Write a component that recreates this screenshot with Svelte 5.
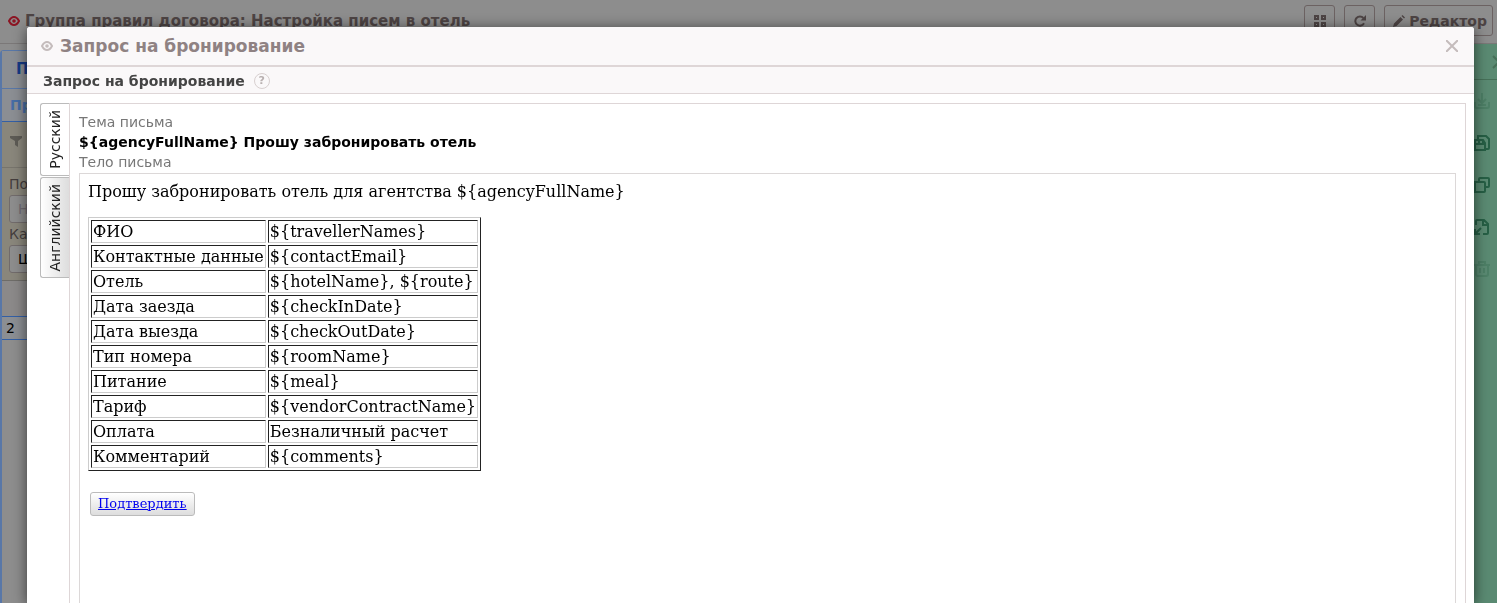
<script>
  const rows = [
    ['ФИО', '${travellerNames}'],
    ['Контактные данные', '${contactEmail}'],
    ['Отель', '${hotelName}, ${route}'],
    ['Дата заезда', '${checkInDate}'],
    ['Дата выезда', '${checkOutDate}'],
    ['Тип номера', '${roomName}'],
    ['Питание', '${meal}'],
    ['Тариф', '${vendorContractName}'],
    ['Оплата', 'Безналичный расчет'],
    ['Комментарий', '${comments}']
  ];

  const subject = '${agencyFullName} Прошу забронировать отель';
  const intro = 'Прошу забронировать отель для агентства ${agencyFullName}';

  let lang = $state('ru');
</script>

{#snippet eye()}
  <svg class="eye" viewBox="0 0 12 10" width="12" height="10">
    <path d="M1 5Q3 1 6 1T11 5Q9 9 6 9T1 5z" fill="none" stroke="currentColor" stroke-width="2" />
    <circle cx="6" cy="5" r="1.8" fill="currentColor" />
  </svg>
{/snippet}

<div class="page">
  <header class="topbar">
    {@render eye()}
    <h1>Группа правил договора: Настройка писем в отель</h1>
    <div class="tools">
      <button class="tool" aria-label="Плитка">
        <svg viewBox="0 0 12 12" width="12" height="12" fill="none" stroke="currentColor" stroke-width="2">
          <path d="M1 1h3v3h-3zM8 1h3v3h-3zM1 8h3v3h-3zM8 8h3v3h-3z" />
        </svg>
      </button>
      <button class="tool" aria-label="Обновить">
        <svg viewBox="0 0 12 12" width="12" height="12" fill="none" stroke="currentColor" stroke-width="2">
          <path d="M10 8.2a4.6 4.6 0 1 1-.6-5.200" />
          <path d="M12 0v5.500H6.500z" fill="currentColor" stroke="none" />
        </svg>
      </button>
      <button class="tool wide">
        <svg viewBox="0 0 12 12" width="12" height="12" fill="currentColor">
          <path d="M0 12l1-3.500L7.500 2 10 4.500 3.500 11zM8.500 1l1-1L12 2.500l-1 1z" />
        </svg>
        Редактор
      </button>
    </div>
  </header>

  <div class="workspace">
    <aside class="list">
      <div class="list-tab">П</div>
      <div class="list-sub">Пр</div>
      <div class="filter-head">
        <svg viewBox="0 0 12 11" width="12" height="11" fill="currentColor">
          <path d="M0 0h12v2L8 5V11L5 9V5L0 2z" />
        </svg>
      </div>
      <div class="filters">
        <label for="search">По</label>
        <input id="search" placeholder="Н" />
        <label for="category">Ка</label>
        <select id="category"><option>Ш</option></select>
      </div>
      <div class="list-head"></div>
      <div class="list-row">2</div>
    </aside>

    <nav class="actions">
      <button class="action close-panel" aria-label="Закрыть панель">
        <svg viewBox="0 0 16 16" width="16" height="16"><path d="M11 2l12 12M11 14L23 2" /></svg>
      </button>
      <button class="action faded" aria-label="Сохранить">
        <svg viewBox="0 0 16 16" width="16" height="16"><path d="M8 0v9M4 6l4 4 4-4M1 9v4q0 2 2 2h10q2 0 2-2v-4M4 12h8" /></svg>
      </button>
      <button class="action" aria-label="Сохранить как">
        <svg viewBox="0 0 16 16" width="16" height="16"><path d="M4 4V1h8l3 3v9q0 1-1 1h-3M1 5h8l2 3v7H1zM1 9h8V6M5 5v4" /></svg>
      </button>
      <button class="action" aria-label="Копировать">
        <svg viewBox="0 0 16 16" width="16" height="16"><path d="M5 5V2q0-1 1-1h8q1 0 1 1v7q0 1-1 1h-3M1 5h9q1 0 1 1v8q0 1-1 1H1z" /></svg>
      </button>
      <button class="action" aria-label="Загрузить">
        <svg viewBox="0 0 16 16" width="16" height="16"><path d="M2 6V2q0-1 1-1h7l4 4v9q0 1-1 1h-4M9 1v5h5M7 9l-6 6M1 10v5h5" /></svg>
      </button>
      <button class="action faded" aria-label="Удалить">
        <svg viewBox="0 0 16 16" width="16" height="16"><path d="M0 4h16M5 4V1h6v3M2 4v9q0 2 2 2h8q2 0 2-2V4M6 7v5M10 7v5" /></svg>
      </button>
    </nav>
  </div>
</div>

<div class="dialog" role="dialog" aria-labelledby="dialog-title">
  <div class="dialog-head">
    {@render eye()}
    <h2 id="dialog-title">Запрос на бронирование</h2>
    <button class="close" aria-label="Закрыть">
      <svg viewBox="0 0 12 12" width="12" height="12" fill="none" stroke="currentColor" stroke-width="2">
        <path d="M0 0l12 12M12 0L0 12" />
      </svg>
    </button>
  </div>

  <div class="section-head">
    <h3>Запрос на бронирование</h3>
    <button class="help">?</button>
  </div>

  <div class="content">
    <div class="tabs" role="tablist">
      <button role="tab" class="tab" class:active={lang === 'ru'} aria-selected={lang === 'ru'} onclick={() => (lang = 'ru')}>
        <span>Русский</span>
      </button>
      <button role="tab" class="tab" class:active={lang === 'en'} aria-selected={lang === 'en'} onclick={() => (lang = 'en')}>
        <span>Английский</span>
      </button>
    </div>

    <div class="panel">
      <div class="label">Тема письма</div>
      <div class="subject">{subject}</div>
      <div class="label">Тело письма</div>
      <div class="letter">
        <p>{intro}</p>
        <table>
          <tbody>
            {#each rows as [name, value]}
              <tr>
                <td>{name}</td>
                <td>{value}</td>
              </tr>
            {/each}
          </tbody>
        </table>
        <a class="confirm" href="#confirm">Подтвердить</a>
      </div>
    </div>
  </div>
</div>

<style>
  :global(body) {
    overflow: hidden;
    font-family: 'DejaVu Sans', sans-serif;
    font-size: 14px;
    color: #000;
  }

  h1,
  h2,
  h3 {
    margin: 0;
  }

  button,
  input,
  select {
    font-family: inherit;
    font-size: inherit;
  }

  svg {
    flex-shrink: 0;
  }

  .page {
    display: flex;
    flex-direction: column;
    height: 100vh;
    background: #8d8d8d;
  }

  .topbar {
    display: flex;
    align-items: center;
    gap: 5px;
    height: 44px;
    box-sizing: border-box;
    padding: 0 4px 2px 8px;
    border-bottom: 1px solid #7b7878;
    color: #4d4444;
  }

  .topbar .eye {
    color: #8c1422;
  }

  h1 {
    font-size: 15px;
    line-height: 20px;
  }

  .tools {
    display: flex;
    gap: 9px;
    margin-left: auto;
  }

  .tool {
    display: flex;
    align-items: center;
    justify-content: center;
    gap: 4px;
    width: 31px;
    height: 31px;
    box-sizing: border-box;
    padding: 0;
    border: 1px solid #6c6262;
    border-radius: 3px;
    background: none;
    color: #4d4444;
    font-weight: bold;
  }

  .tool.wide {
    width: auto;
    padding: 0 5px 0 8px;
  }

  .workspace {
    display: flex;
    justify-content: space-between;
    flex: 1;
  }

  .list {
    width: 200px;
    margin-top: 6px;
    border: 1px solid #5877a8;
    border-left-width: 2px;
    border-bottom: 0;
    border-radius: 4px 0 0 0;
    background: #8d8d8d;
  }

  .list-tab {
    height: 37px;
    padding-left: 14px;
    border-bottom: 1px solid #5877a8;
    background: #8b8e93;
    color: #163a86;
    font-size: 15px;
    font-weight: bold;
    line-height: 37px;
  }

  .list-sub {
    height: 32px;
    padding-left: 8px;
    border-bottom: 1px solid #335fa5;
    background: #8b8e93;
    color: #466da5;
    font-weight: bold;
    line-height: 32px;
  }

  .filter-head {
    display: flex;
    align-items: center;
    height: 46px;
    box-sizing: border-box;
    padding: 0 8px 6px;
    border-bottom: 1px solid #77746c;
    background: #89867b;
    color: #5d5b55;
  }

  .filters {
    display: flex;
    flex-direction: column;
    padding: 5px 7px 7px;
    border-bottom: 1px solid #6e6c68;
    background: #89867b;
    color: #443d3d;
  }

  .filters label {
    line-height: 22px;
  }

  .filters input,
  .filters select {
    height: 28px;
    box-sizing: border-box;
    padding: 0 8px;
    border: 1px solid #716b6b;
    border-radius: 3px;
    background: #8d8d8d;
    color: #000;
    appearance: none;
  }

  .filters input::placeholder {
    color: #716b72;
  }

  .list-head {
    height: 35px;
    border-bottom: 1px solid #335fa5;
    background: #8b8989;
  }

  .list-row {
    padding-left: 4px;
    border-bottom: 1px solid #335fa5;
    background: #8b8e93;
    line-height: 22px;
  }

  .actions {
    display: flex;
    flex-direction: column;
    width: 23px;
    background: #5a8a72;
  }

  .action {
    display: flex;
    align-items: center;
    height: 42px;
    padding: 0;
    border: 0;
    background: none;
    color: #265f45;
  }

  .action svg {
    overflow: visible;
    fill: none;
    stroke: currentColor;
    stroke-width: 2;
  }

  .action.faded {
    color: #4d7f66;
  }

  .action.close-panel {
    height: 36px;
    padding-left: 8px;
    border-bottom: 1px solid #467058;
    color: #467058;
  }

  .dialog {
    position: fixed;
    inset: 27px 23px 0 27px;
    display: flex;
    flex-direction: column;
    border-radius: 3px 3px 0 0;
    background: #fff;
    box-shadow: 0 2px 14px rgba(0, 0, 0, 0.6);
  }

  .dialog-head {
    display: flex;
    align-items: center;
    gap: 7px;
    height: 38px;
    padding: 0 16px 0 14px;
    border-bottom: 2px solid #ded6d7;
    border-radius: 3px 3px 0 0;
    background: #faf8f9;
    color: #c4bcbc;
  }

  h2 {
    color: #8f8283;
    font-size: 17px;
    line-height: 20px;
  }

  .close {
    display: flex;
    margin-left: auto;
    padding: 0;
    border: 0;
    background: none;
    color: #c4bcbc;
  }

  .section-head {
    display: flex;
    align-items: center;
    gap: 9px;
    height: 26px;
    box-sizing: content-box;
    padding-left: 16px;
    border-bottom: 1px solid #ded6d7;
    background: #faf8f9;
  }

  h3 {
    color: #444;
    font-size: 14px;
    line-height: 20px;
  }

  .section-head h3,
  .help {
    margin-top: 2px;
  }

  .help {
    width: 16px;
    height: 16px;
    box-sizing: border-box;
    padding: 0;
    border: 1px solid #d8d0d0;
    border-radius: 50%;
    background: none;
    color: #b8b0b0;
    font-size: 11px;
    font-weight: bold;
    line-height: 14px;
  }

  .content {
    display: flex;
    flex: 1;
    padding: 9px 8px 0 13px;
  }

  .tabs {
    display: flex;
    flex-direction: column;
    gap: 1px;
    width: 29px;
  }

  .tab {
    display: flex;
    align-items: center;
    justify-content: center;
    padding: 6px 5px;
    border: 1px solid #bbb;
    border-right: 0;
    border-radius: 3px 0 0 3px;
    background: linear-gradient(to right, #fff, #ddd);
    color: #222;
  }

  .tab.active {
    background: #fff;
  }

  .tab span {
    writing-mode: vertical-rl;
    transform: rotate(180deg);
  }

  .panel {
    display: flex;
    flex-direction: column;
    flex: 1;
    padding: 8px 9px 0;
    border: 1px solid #ded6d7;
    border-bottom: 0;
  }

  .label,
  .subject {
    line-height: 20px;
  }

  .label {
    color: #777;
  }

  .subject {
    font-weight: bold;
  }

  .letter {
    flex: 1;
    margin-top: 1px;
    padding: 8px;
    border: 1px solid #dcd8d8;
    border-bottom: 0;
    font-family: 'DejaVu Serif', serif;
    font-size: 16px;
    line-height: 19px;
  }

  .letter p {
    margin: 0 0 16px;
  }

  .letter table {
    border: 1px solid;
    border-color: #ccc #222 #222 #ccc;
    border-spacing: 2px;
  }

  .letter td {
    padding: 1px;
    border: 1px solid;
    border-color: #222 #ccc #ccc #222;
  }

  .confirm {
    display: inline-block;
    margin: 21px 2px;
    padding: 2px 7px;
    border: 1px solid #bbb;
    border-radius: 3px;
    background: linear-gradient(#fff, #ddd);
    color: #00e;
    font-size: 13px;
    line-height: 18px;
  }
</style>
